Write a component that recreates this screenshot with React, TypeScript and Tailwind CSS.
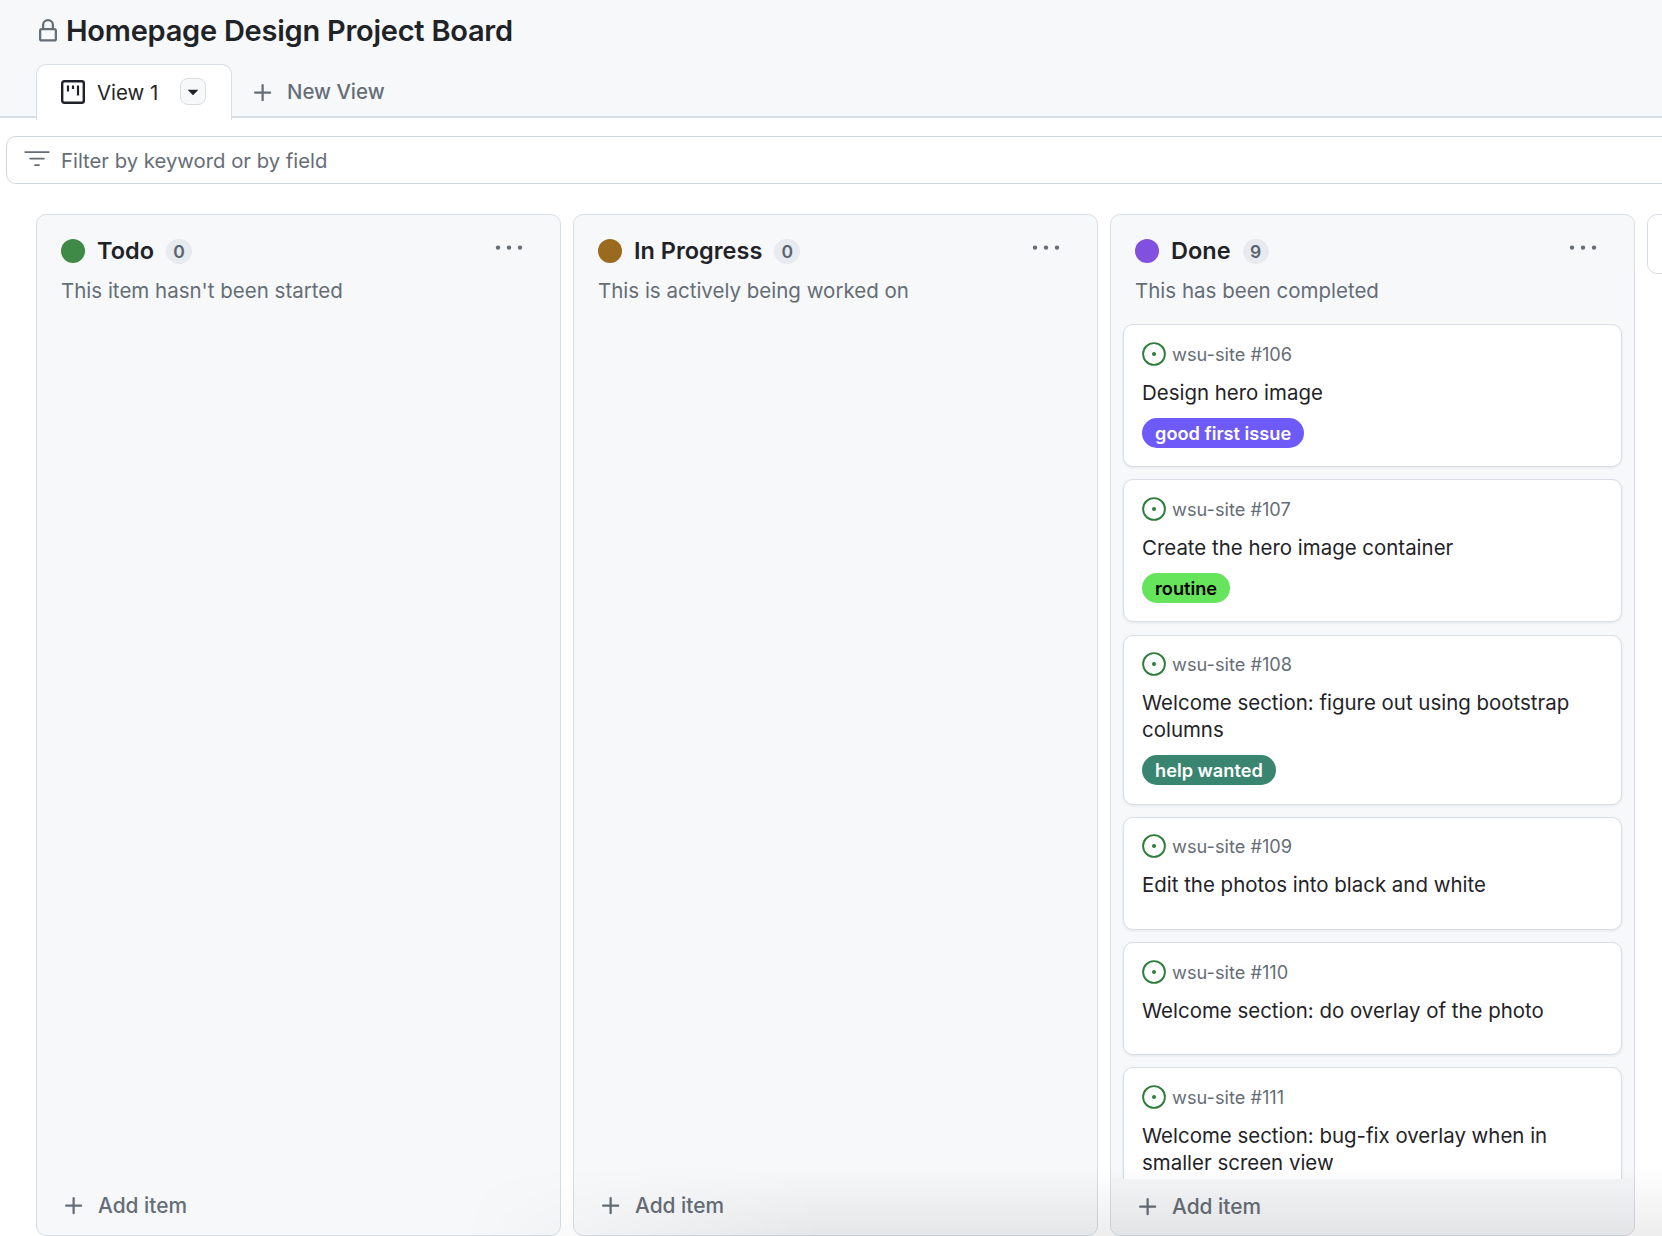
import React from 'react';

const FONT = 'font-["Inter","Liberation_Sans",sans-serif]';

const PlusIcon = ({ className }: { className?: string }) => (
  <svg viewBox="0 0 16 16" fill="currentColor" className={className}>
    <path d="M7.75 2a.75.75 0 0 1 .75.75V7h4.25a.75.75 0 0 1 0 1.5H8.5v4.25a.75.75 0 0 1-1.5 0V8.5H2.75a.75.75 0 0 1 0-1.5H7V2.75A.75.75 0 0 1 7.75 2Z" />
  </svg>
);

const KebabIcon = () => (
  <svg viewBox="0 0 16 16" fill="currentColor" className="w-[32px] h-[32px] text-[#656d76]">
    <path d="M8 8.9a1.1 1.1 0 1 0 0-2.2 1.1 1.1 0 0 0 0 2.2ZM2.5 8.9a1.1 1.1 0 1 0 0-2.2 1.1 1.1 0 0 0 0 2.2Zm11 0a1.1 1.1 0 1 0 0-2.2 1.1 1.1 0 0 0 0 2.2Z" />
  </svg>
);

const IssueIcon = () => (
  <svg viewBox="0 0 24 24" className="w-[24px] h-[24px] flex-none">
    <circle cx="12" cy="12" r="10.9" fill="none" stroke="#2f7d3b" strokeWidth="1.9" />
    <circle cx="12" cy="12" r="2" fill="#2f7d3b" />
  </svg>
);

type Card = {
  repo: string;
  title: string;
  label?: { text: string; className: string };
};

const CARDS: Card[] = [
  { repo: 'wsu-site #106', title: 'Design hero image', label: { text: 'good first issue', className: 'bg-[#6e5af8] text-white' } },
  { repo: 'wsu-site #107', title: 'Create the hero image container', label: { text: 'routine', className: 'bg-[#66e45c] text-black' } },
  { repo: 'wsu-site #108', title: 'Welcome section: figure out using bootstrap columns', label: { text: 'help wanted', className: 'bg-[#3a8570] text-white' } },
  { repo: 'wsu-site #109', title: 'Edit the photos into black and white' },
  { repo: 'wsu-site #110', title: 'Welcome section: do overlay of the photo' },
  { repo: 'wsu-site #111', title: 'Welcome section: bug-fix overlay when in smaller screen view' },
];

const IssueCard = ({ card }: { card: Card }) => (
  <div className={`flex-none bg-white border border-[#d8dee4] rounded-[10px] shadow-[0_1px_3px_rgba(31,35,40,0.08)] px-[18px] pt-[16.5px] ${card.label ? 'pb-[18.5px]' : 'pb-[30.5px]'}`}>
    <div className="flex items-center gap-[6px] h-[24px]">
      <IssueIcon />
      <span className="text-[18.2px] text-[#656d76] leading-[24px]">{card.repo}</span>
    </div>
    <div className="mt-[13px] text-[20.45px] leading-[27px] text-[#1f2328]">{card.title}</div>
    {card.label && (
      <div className="mt-[12px] flex">
        <span className={`h-[30px] px-[13px] rounded-full text-[18.2px] font-semibold leading-[30px] ${card.label.className}`}>
          {card.label.text}
        </span>
      </div>
    )}
  </div>
);

const Column = ({ name, color, count, description, cards }: { name: string; color: string; count: number; description: string; cards?: Card[] }) => (
  <div className="flex-none w-[525px] h-[1022px] bg-[#f6f8fa] border border-[#d8dee4] rounded-[10px] flex flex-col overflow-hidden">
    <div className="flex-none pl-[24px] pr-[22px] pt-[24px]">
      <div className="flex items-center h-[24px]">
        <span className="w-[24px] h-[24px] rounded-full flex-none" style={{ backgroundColor: color }} />
        <span className="ml-[12px] text-[23.5px] font-semibold text-[#1f2328] leading-[24px]">{name}</span>
        <span className="ml-[12px] w-[26px] h-[25px] rounded-full bg-[#e7eaee] text-[#59636e] text-[17.5px] font-semibold leading-[25px] text-center">{count}</span>
        <span className="ml-auto mr-[13px] -mt-[6px]"><KebabIcon /></span>
      </div>
      <div className="mt-[14px] text-[20.5px] leading-[28px] text-[#656d76]">{description}</div>
    </div>
    <div className="flex-1 min-h-0 overflow-hidden mt-[19px] px-[12px] flex flex-col gap-[12.3px]">
      {cards?.map(c => <IssueCard key={c.repo} card={c} />)}
    </div>
    <div className={`flex-none h-[56px] flex items-center pl-[25px] ${cards ? 'bg-[#f5f6f8]' : 'pb-[3px]'}`}>
      <PlusIcon className="w-[24px] h-[24px] text-[#656d76]" />
      <span className="ml-[12px] text-[20.9px] font-medium text-[#656d76]">Add item</span>
    </div>
  </div>
);

export default function App() {
  return (
    <div className={`${FONT} w-[1662px] h-[1236px] overflow-hidden bg-white relative`}>
      {/* Header */}
      <div className="h-[118px] bg-[#f6f8fa] border-b-2 border-[#d8dee4]">
        <div className="flex items-center pl-[36px] pt-[12px] h-[50px]">
          <svg viewBox="0 0 16 16" fill="#656d76" className="w-[24px] h-[24px] flex-none">
            <path d="M4 4a4 4 0 0 1 8 0v2h.25c.966 0 1.75.784 1.75 1.75v5.5A1.75 1.75 0 0 1 12.25 15h-8.5A1.75 1.75 0 0 1 2 13.25v-5.5C2 6.784 2.784 6 3.75 6H4Zm8.25 3.5h-8.5a.25.25 0 0 0-.25.25v5.5c0 .138.112.25.25.25h8.5a.25.25 0 0 0 .25-.25v-5.5a.25.25 0 0 0-.25-.25ZM10.5 6V4a2.5 2.5 0 1 0-5 0v2Z" />
          </svg>
          <h1 className="ml-[6px] text-[29px] font-semibold text-[#1f2328] tracking-[-0.25px]">Homepage Design Project Board</h1>
        </div>
        <div className="flex items-stretch pl-[36px] mt-[14px] h-[54px]">
          <div className="w-[196px] h-[56px] bg-white border border-b-0 border-[#d8dee4] rounded-t-[10px] flex items-center pl-[24px]">
            <svg viewBox="0 0 24 24" fill="none" className="w-[24px] h-[24px] flex-none text-[#1f2328] -mt-[2px]" stroke="currentColor">
              <rect x="1.2" y="1.2" width="21.6" height="21.6" rx="2" strokeWidth="2.4" />
              <path d="M7 5.5v6M12 5.5v3.5M17 5.5v10" strokeWidth="2.2" />
            </svg>
            <span className="ml-[12px] mt-[1px] text-[20.4px] text-[#1f2328]">View 1</span>
            <span className="ml-[22px] w-[26px] h-[27px] -mt-[2px] rounded-[8px] bg-[#f6f8fa] border border-[#d8dee4] flex items-center justify-center">
              <svg viewBox="0 0 16 16" fill="#1f2328" className="w-[22px] h-[22px] -mt-[2px]">
                <path d="m4.427 7.427 3.396 3.396a.25.25 0 0 0 .354 0l3.396-3.396A.25.25 0 0 0 11.396 7H4.604a.25.25 0 0 0-.177.427Z" />
              </svg>
            </span>
          </div>
          <div className="flex items-center ml-[19px] pt-[3px]">
            <PlusIcon className="w-[24px] h-[24px] text-[#656d76]" />
            <span className="ml-[12px] text-[20.4px] font-medium text-[#656d76]">New View</span>
          </div>
        </div>
      </div>

      {/* Filter */}
      <div className="pl-[6px] mt-[18px]">
        <div className="w-[1700px] h-[48px] bg-white border border-[#d0d7de] rounded-[10px] flex items-center pl-[17px]">
          <svg viewBox="0 0 16 16" fill="#656d76" className="w-[26px] h-[26px] flex-none -mt-[3px]">
            <path d="M.75 3.2h14.5a.55.55 0 0 1 0 1.1H.75a.55.55 0 0 1 0-1.1ZM3.2 7.75A.55.55 0 0 1 3.75 7.2h8.5a.55.55 0 0 1 0 1.1h-8.5a.55.55 0 0 1-.55-.55Zm3 4a.55.55 0 0 1 .55-.55h2.5a.55.55 0 0 1 0 1.1h-2.5a.55.55 0 0 1-.55-.55Z" />
          </svg>
          <span className="ml-[11px] mt-[2px] text-[20.3px] text-[#656d76]">Filter by keyword or by field</span>
        </div>
      </div>

      {/* Board */}
      <div className="flex gap-[12px] pl-[36px] mt-[30px] w-[1800px]">
        <Column name="Todo" color="#3f8a46" count={0} description="This item hasn't been started" />
        <Column name="In Progress" color="#9a6a1f" count={0} description="This is actively being worked on" />
        <Column name="Done" color="#8250df" count={9} description="This has been completed" cards={CARDS} />
        <div className="flex-none w-[60px] h-[60px] bg-white border border-[#d8dee4] rounded-[10px]" />
      </div>

      {/* fade along the bottom edge of the capture */}
      <div className="absolute right-0 bottom-0 w-[1200px] h-[70px] pointer-events-none bg-gradient-to-b from-transparent to-black/[0.07] [mask-image:linear-gradient(to_right,transparent,black_30%)]" />
    </div>
  );
}
